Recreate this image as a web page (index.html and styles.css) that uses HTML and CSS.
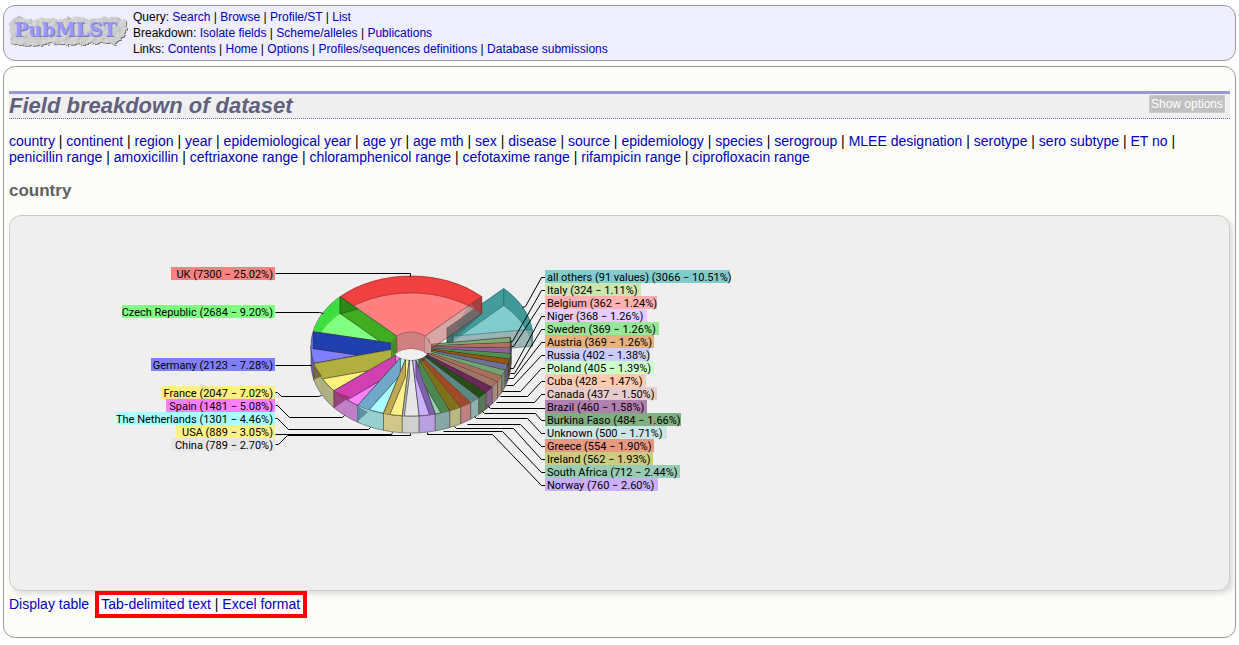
FILE: index.html
```html
<!DOCTYPE html>
<html lang="en">
<head>
<meta charset="utf-8">
<title>PubMLST - Field breakdown of dataset</title>
<link rel="stylesheet" href="styles.css">
</head>
<body>
<header class="banner">
  <svg class="logo" viewBox="0 0 122 36" role="img" aria-label="PubMLST">
    <defs>
      <filter id="stone" x="-5%" y="-10%" width="110%" height="120%">
        <feTurbulence type="fractalNoise" baseFrequency="0.16" numOctaves="3" seed="4" result="n"/>
        <feDisplacementMap in="SourceGraphic" in2="n" scale="6" result="shape"/>
        <feDiffuseLighting in="n" surfaceScale="1" lighting-color="#dcdcdc" result="light"><feDistantLight azimuth="225" elevation="62"/></feDiffuseLighting>
        <feComposite in="light" in2="shape" operator="in" result="tex"/>
        <feOffset in="shape" dx="1" dy="1" result="shade"/>
        <feMerge><feMergeNode in="shade"/><feMergeNode in="tex"/></feMerge>
      </filter>
    </defs>
    <path filter="url(#stone)" fill="#777" d="M5 6L14 4 21 7 30 6 39 4 48 6 60 5 70 3 80 6 92 5 104 4 119 6 121 10 119 19 114 26 108 31 94 29 81 31 62 32 44 30 26 33 10 32 3 30 5 24 2 18 2 10Z"/>
    <text class="logo-shadow" x="8" y="24">PubMLST</text>
    <text class="logo-text" x="7" y="23">PubMLST</text>
  </svg>
  <nav class="menu">
    <div>Query: <a href="#">Search</a> | <a href="#">Browse</a> | <a href="#">Profile/ST</a> | <a href="#">List</a></div>
    <div>Breakdown: <a href="#">Isolate fields</a> | <a href="#">Scheme/alleles</a> | <a href="#">Publications</a></div>
    <div>Links: <a href="#">Contents</a> | <a href="#">Home</a> | <a href="#">Options</a> | <a href="#">Profiles/sequences definitions</a> | <a href="#">Database submissions</a></div>
  </nav>
</header>
<main class="content">
  <div class="title-bar">
    <h1>Field breakdown of dataset</h1>
    <button type="button" class="options">Show options</button>
  </div>
  <nav class="fields">
    <a href="#">country</a> | <a href="#">continent</a> | <a href="#">region</a> | <a href="#">year</a> | <a href="#">epidemiological year</a> | <a href="#">age yr</a> | <a href="#">age mth</a> | <a href="#">sex</a> | <a href="#">disease</a> | <a href="#">source</a> | <a href="#">epidemiology</a> | <a href="#">species</a> | <a href="#">serogroup</a> | <a href="#">MLEE designation</a> | <a href="#">serotype</a> | <a href="#">sero subtype</a> | <a href="#">ET no</a> | <a href="#">penicillin range</a> | <a href="#">amoxicillin</a> | <a href="#">ceftriaxone range</a> | <a href="#">chloramphenicol range</a> | <a href="#">cefotaxime range</a> | <a href="#">rifampicin range</a> | <a href="#">ciprofloxacin range</a>
  </nav>
  <h2>country</h2>
  <section class="panel">
    <svg id="pie" class="pie" viewBox="10 216 800 374" role="img" aria-label="Breakdown by country"></svg>
  </section>
  <div class="formats">
    <a href="#">Display table</a>
    <div class="marked"><a href="#">Tab-delimited text</a> | <a href="#">Excel format</a></div>
  </div>
</main>
<script src="chart.js"></script>
</body>
</html>
```

FILE: styles.css
```css
* { box-sizing: border-box; }
body {
  margin: 5px 3px;
  background: #fff;
  color: #000;
  font-family: "Liberation Sans", Arial, sans-serif;
  font-size: 14px;
  line-height: 16px;
}
a { color: #0000bb; text-decoration: none; }
.banner {
  display: flex;
  gap: 5px;
  padding: 3px;
  border: 1px solid #999;
  border-radius: 12px;
  background: #eeeeff;
  font-size: 12px;
}
.logo { width: 121px; height: 36px; margin-top: 4px; flex: none; }
.logo-text, .logo-shadow { font: bold 19px "DejaVu Serif", serif; }
.logo-text { fill: #9999ff; }
.logo-shadow { fill: #7f7fb8; }
.content {
  margin-top: 5px;
  padding: 24px 5px 19px;
  border: 1px solid #999;
  border-radius: 12px;
  background: #fcfdf8;
}
.title-bar {
  display: flex;
  justify-content: space-between;
  align-items: flex-start;
  padding-right: 5px;
  border-top: 3px solid #9999cc;
  border-bottom: 1px dotted #6666aa;
  background: #efefef;
}
h1 {
  margin: 0;
  color: #606080;
  font-size: 22px;
  font-style: italic;
  line-height: 24px;
}
.options {
  margin-top: 1px;
  padding: 0 1px;
  border: 1px solid #ccc;
  background: #c0c0c0;
  color: #fff;
  font: 12px/16px "Liberation Sans", Arial, sans-serif;
}
.fields { margin-top: 14px; }
h2 {
  margin: 16px 0 14px;
  color: #606060;
  font-size: 17px;
  line-height: 20px;
}
.panel {
  border: 1px solid #ccc;
  border-radius: 12px;
  background: #efefef;
  box-shadow: 3px 3px 5px #ddd;
}
.pie { display: block; width: 100%; max-width: 800px; }
.pie text { font: 11px Roboto, sans-serif; fill: #000; }
.leader { fill: none; stroke: #000; stroke-width: 1; }
.formats { display: flex; align-items: baseline; gap: 6px; }
.marked { padding: 2px 3px 3px 2px; border: 4px solid #f00; line-height: 14px; }
```

FILE: chart.js
```js
const CX = 411, CY = 346, RX = 100, RY = 70, HOLE = 0.2, DEPTH = 17;

// name, value, percent, surface, wall, rim, label fill, label x, label y, label width, leader
const slices = [
  ["UK", "7300", 25.02, "#ff8080", "#f04040", "", "#ff8080", 171, 267, 104, "275,273 410,273 410,276"],
  ["Czech Republic", "2684", 9.20, "#80ff80", "#40ac20", "#70d070", "#80ff80", 122, 305, 153, "275,312 319,312 323,313"],
  ["Germany", "2123", 7.28, "#8080ff", "#2040b0", "#6060b8", "#8080ff", 151, 358, 124, "275,365 311,365"],
  ["France", "2047", 7.02, "#fff080", "#b0b040", "#b0b080", "#fff080", 161, 386, 114, "275,392 277,392 281,396 318,396 321,395"],
  ["Spain", "1481", 5.08, "#ff80ff", "#d040b0", "#c080c8", "#ff80ff", 166, 399, 109, "275,405 277,405 289,417 342,417 344,415"],
  ["The Netherlands", "1301", 4.46, "#a8ffff", "#70a8cc", "#98d0d0", "#a8ffff", 117, 412, 158, "275,418 277,418 288,429 368,429 370,427"],
  ["USA", "889", 3.05, "#fff088", "#c0a850", "#d0c888", "#fff088", 176, 425, 99, "275,434 391,434 392,432"],
  ["China", "789", 2.70, "#e6e6e6", "#b8b8b8", "#d0d0d0", "#e6e6e6", 171, 438, 104, "275,444 278,444 287,435 410,435 410,433"],
  ["Norway", "760", 2.60, "#ccb0ff", "#7f60b0", "#b8a0e0", "#ccb0ff", 545, 478, 113, "545,485 541,485 492,434 427,434 427,432"],
  ["South Africa", "712", 2.44, "#98ccb4", "#4c8850", "#88a8a8", "#98ccb4", 545, 465, 135, "545,472 541,472 502,431 443,431"],
  ["Ireland", "562", 1.93, "#a89838", "#807018", "#b8b880", "#cccc80", 545, 452, 108, "545,459 541,459 513,428 456,428 454,426"],
  ["Greece", "554", 1.90, "#b87050", "#a04828", "#c08080", "#e69880", 545, 439, 109, "545,446 541,446 520,424 467,424"],
  ["Unknown", "500", 1.71, "#88a8a8", "#5c8884", "#90b0b0", "#cce6e6", 545, 426, 122, "545,433 541,433 527,418 476,418 474,416"],
  ["Burkina Faso", "484", 1.66, "#386030", "#284c18", "#587858", "#80b080", 545, 413, 136, "545,420 541,420 535,413 484,413 482,411"],
  ["Brazil", "460", 1.58, "#784068", "#682858", "#886088", "#b080b0", 545, 400, 102, "545,408 490,408 487,405"],
  ["Canada", "437", 1.50, "#a88078", "#a07468", "#a88880", "#e6cccc", 545, 387, 112, "545,394 541,394 534,402 496,402"],
  ["Cuba", "428", 1.47, "#b88068", "#a87058", "#b08870", "#ffccb0", 545, 374, 101, "545,381 541,381 527,396 500,396"],
  ["Poland", "405", 1.39, "#78b078", "#70a470", "#709070", "#ccffcc", 545, 361, 109, "545,368 541,368 520,391 502,391"],
  ["Russia", "402", 1.38, "#707098", "#707098", "#606080", "#ccccff", 545, 348, 105, "545,355 541,355 513,385 506,385"],
  ["Austria", "369", 1.26, "#905810", "#905810", "#704818", "#e6b080", 545, 335, 109, "545,342 541,342 513,378 508,378"],
  ["Sweden", "369", 1.26, "#509050", "#509050", "#406040", "#98e698", 545, 322, 114, "545,329 541,329 514,373 510,373"],
  ["Niger", "368", 1.26, "#906098", "#906098", "#604068", "#e6ccff", 545, 309, 102, "545,316 541,316 513,368 510,368"],
  ["Belgium", "362", 1.24, "#b07060", "#b07060", "#704040", "#ffb0b0", 545, 296, 112, "545,303 541,303 513,346 511,346"],
  ["Italy", "324", 1.11, "#80a870", "#80a870", "#506040", "#cce6b0", 545, 283, 96, "545,290 541,290 512,341 510,341"],
  ["all others (91 values)", "3066", 10.51, "#80cccc", "#409898", "", "#80cccc", 545, 270, 185, "545,277 541,277 525,306 522,307"]
];

const svg = document.getElementById("pie");

function add(tag, attrs, text) {
  const node = document.createElementNS("http://www.w3.org/2000/svg", tag);
  for (const key in attrs) node.setAttribute(key, attrs[key]);
  if (text) node.textContent = text;
  svg.appendChild(node);
  return node;
}

function point(deg, scale, dx = 0, dy = 0) {
  const a = deg * Math.PI / 180;
  return [CX + dx + RX * scale * Math.cos(a), CY + dy - RY * scale * Math.sin(a)];
}

function arc(from, to, scale, dx, dy) {
  const pts = [];
  for (let i = 0; i <= 16; i++) pts.push(point(from + (to - from) * i / 16, scale, dx, dy));
  return pts;
}

function poly(pts, fill, opacity = 1, stroke = "none", clip) {
  const attrs = { points: pts.map(p => p.map(v => v.toFixed(1)).join()).join(" "), fill, "fill-opacity": opacity, stroke, "stroke-opacity": 0.55 };
  if (clip) attrs["clip-path"] = clip;
  add("polygon", attrs);
}

const sector = (a, b, dx = 0, dy = 0) => [...arc(a, b, 1, dx, dy), ...arc(b, a, HOLE, dx, dy)];
const band = (a, b, s, dx = 0, dy = 0) => [...arc(a, b, s, dx, dy), ...arc(b, a, s, dx, dy + DEPTH)];
const wall = (a, dx = 0, dy = 0) => [point(a, HOLE, dx, dy), point(a, 1, dx, dy), point(a, 1, dx, dy + DEPTH), point(a, HOLE, dx, dy + DEPTH)];

// Exploded slice
const ox = 22, oy = -8;
poly(sector(7.2, 45, ox, oy), "#80cccc");
poly(band(7.2, 45, 1, ox, oy), "#409898", 1, "#206868");
poly(wall(45, ox, oy), "#409898", 0.95, "#205858");
poly([[447, 328], [482, 303], [482, 314], [447, 345]], "#386868", 0.7);
poly(wall(7.2, ox, oy), "#80a0a0", 0.75, "#206060");
poly(band(7.2, 45, HOLE, ox, oy), "#386868", 0.5, "#204848");

// Ring, counter-clockwise from the right edge of the largest slice
let start = 45;
slices.slice(0, -1).forEach(([name, count, pct, surface, dark, rim], i) => {
  const end = start + pct * 3.6;
  const hi = Math.min(end, 367.2);
  if (i > 0 && hi > 180) {
    poly(band(Math.max(start, 180), hi, 1), rim, 1, "#404040");
  }
  poly(sector(start, hi), surface, 1, i ? "#202020" : "none");
  if (i > 0) {
    const id = "cut" + i;
    const clip = add("clipPath", { id });
    const shape = document.createElementNS("http://www.w3.org/2000/svg", "polygon");
    shape.setAttribute("points", sector(start, hi).map(p => p.join()).join(" "));
    clip.appendChild(shape);
    if (i === 1) poly(band(start, hi, 1), "#40dd40", 1, "none", "url(#cut1)");
    // The visible cut is the leading one left of the lowest point, the trailing one right of it
    poly(wall(i < 8 ? start : hi), dark, 1, "#202020", `url(#${id})`);
    if (i === 1) poly([[340, 297], [340, 314], [358, 309]], "#2e8818", 1, "#205010");
  }
  if (i === 0) poly(band(45, 135, 1), "#f04040", 1, "#802020");
  start = end;
});

// Corners seen through the rim
poly([[313, 363], [313, 380], [322, 376]], "#706038", 0.9);
poly([[334, 391], [334, 408], [350, 397]], "#903068", 0.8);
poly([[357, 406], [357, 422], [368, 412]], "#508098", 0.8);

// Cut side and inner wall of the largest slice
poly(wall(45), "#c06060", 0.5, "#602020");
poly([[481, 297], [481, 314], [471, 304]], "#b03030", 0.7);
poly([[468, 306], [481, 297], [481, 314], [460, 328], [457, 325]], "#306060", 0.2);

// Hole
poly(arc(0, 360, HOLE), "#b05060");
poly(band(135, 180, HOLE), "#389020", 0.9);
poly(band(45, 135, HOLE), "#d08080", 1, "#804040");
poly([[425, 336], [431, 345], [431, 353], [425, 353]], "#c8a0a0");
const lens = add("clipPath", { id: "floor" });
const rimEllipse = document.createElementNS("http://www.w3.org/2000/svg", "ellipse");
for (const [k, v] of Object.entries({ cx: CX, cy: CY, rx: 20, ry: 14 })) rimEllipse.setAttribute(k, v);
lens.appendChild(rimEllipse);
add("ellipse", { cx: CX, cy: CY + DEPTH, rx: 20, ry: 14, fill: "#f0f0f0", "clip-path": "url(#floor)" });

for (const [name, count, pct, , , , fill, x, y, width, line] of slices) {
  // Half-pixel shift centres the stroke on the pixel grid
  add("polyline", { class: "leader", points: line, transform: "translate(0.5 0.5)" });
  add("rect", { x, y, width, height: 13, fill });
  const left = x < 500;
  add("text", {
    x: left ? x + width - 2 : x + 2,
    y: y + 11,
    "text-anchor": left ? "end" : "start"
  }, `${name} (${count} − ${pct.toFixed(2)}%)`);
}
```
